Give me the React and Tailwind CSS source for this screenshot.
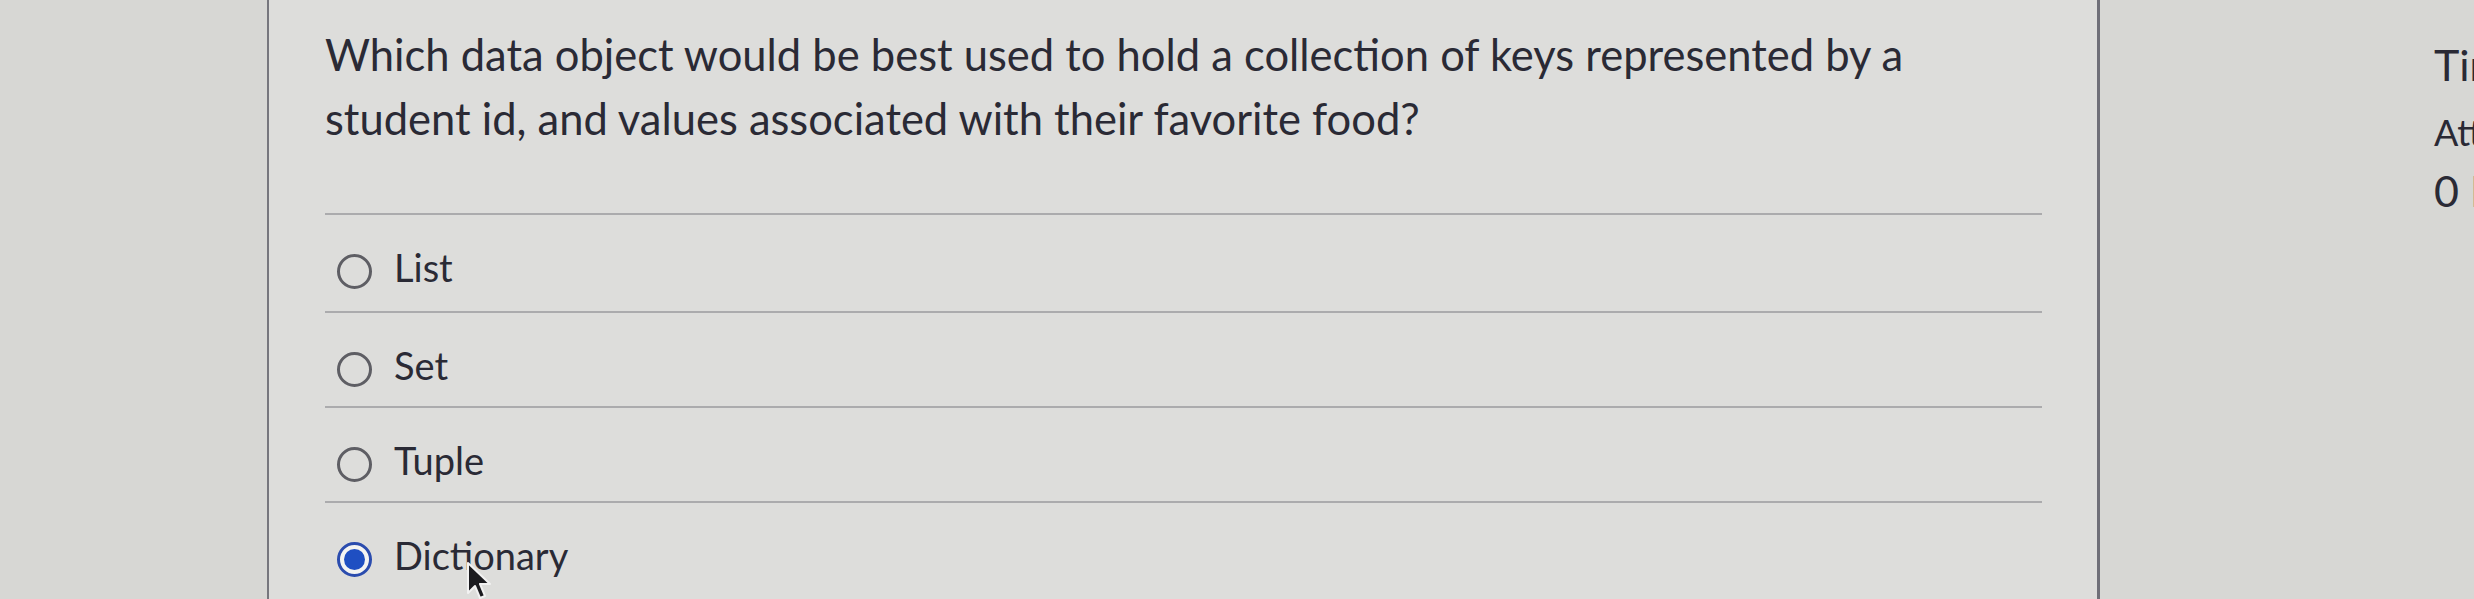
import React from 'react'

const options = [
  { label: 'List', selected: false, h: 'h-[98px]' },
  { label: 'Set', selected: false, h: 'h-[95px]' },
  { label: 'Tuple', selected: false, h: 'h-[95px]' },
  { label: 'Dictionary', selected: true, h: 'h-[95px]' },
]

const Radio = ({ selected }) =>
  selected ? (
    <div className="mt-[1px] w-[35px] h-[35px] shrink-0 rounded-full border-[3px] border-[#2b4cae] bg-[#f4f4f2] flex items-center justify-center">
      <div className="w-[21px] h-[21px] rounded-full bg-[#1f4fc2]" />
    </div>
  ) : (
    <div className="mt-[1px] w-[35px] h-[35px] shrink-0 rounded-full border-[3px] border-[#5e5e64]" />
  )

const Cursor = () => (
  <svg
    className="absolute left-[466px] top-[561px]"
    width="26"
    height="40"
    viewBox="0 0 26 40"
  >
    <path
      d="M2 2 L2 32 L9 25 L14 37 L19 35 L14 23 L24 23 Z"
      fill="#1b1b1f"
      stroke="#f2f2f2"
      strokeWidth="2"
      strokeLinejoin="round"
    />
  </svg>
)

export default function App() {
  return (
    <div
      className="relative w-[2474px] h-[599px] overflow-hidden flex bg-[#d7d7d4] text-[#2a2a35]"
      style={{ fontFamily: 'Lato, "Noto Sans", sans-serif' }}
    >
      {/* left gutter */}
      <div className="w-[269px] shrink-0 border-r-[2px] border-[#76767d]" />

      {/* question panel */}
      <div className="w-[1831px] shrink-0 bg-[#dddddb] border-r-[3px] border-[#6f6f78] pl-[56px] pr-[55px] pt-[22px]">
        <p className="text-[43.5px] leading-[64px] max-w-[1650px]">
          Which data object would be best used to hold a collection of keys represented by a
          student id, and values associated with their favorite food?
        </p>

        <div className="mt-[63px]">
          {options.map((opt) => (
            <div
              key={opt.label}
              className={`${opt.h} border-t-[2px] border-[#ababad] flex items-start pt-[38px] pl-[12px]`}
            >
              <Radio selected={opt.selected} />
              <span className="ml-[22px] text-[38px] leading-[28px]">{opt.label}</span>
            </div>
          ))}
        </div>
      </div>

      {/* sidebar */}
      <div className="flex-1 pl-[334px] pt-[40px] whitespace-nowrap">
        <div className="text-[43px] leading-[50px]">Time Running:</div>
        <div className="mt-[21px] text-[36px] leading-[42px]">Attempt due: Mar 5 at 11:59pm</div>
        <div className="mt-[13px] text-[43px] leading-[50px]">0 Minutes, 19 Seconds</div>
      </div>

      <Cursor />
    </div>
  )
}
